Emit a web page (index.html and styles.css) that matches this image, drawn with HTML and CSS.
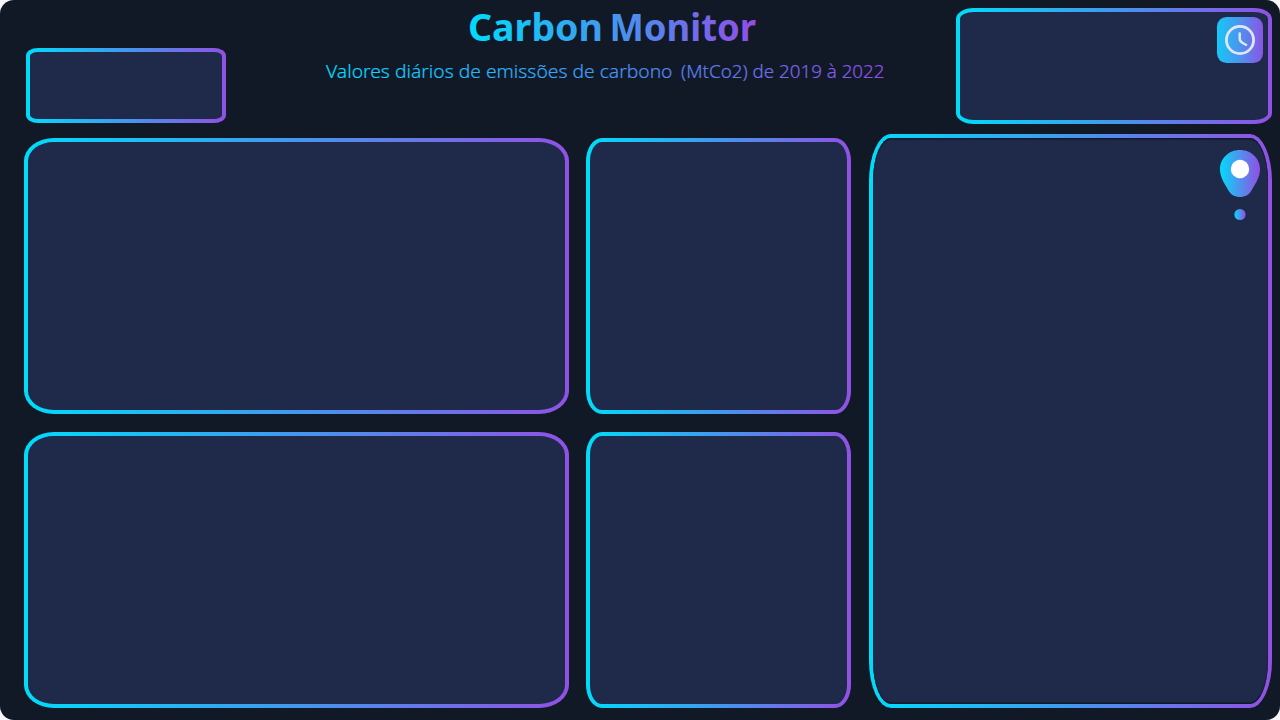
FILE: index.html
```html
<!DOCTYPE html>
<html lang="pt-BR">
<head>
<meta charset="utf-8">
<title>Carbon Monitor</title>
<link rel="stylesheet" href="styles.css">
</head>
<body>
<div class="dashboard">
  <header class="header">
    <div class="panel panel-filter"><div class="panel-body"></div></div>
    <svg class="heading" width="570" height="100" viewBox="0 0 570 100">
      <defs>
        <linearGradient id="title-grad" gradientUnits="userSpaceOnUse" x1="149" y1="0" x2="436" y2="0">
          <stop offset="0" stop-color="#00dcfb"/><stop offset=".5" stop-color="#4397ee"/><stop offset="1" stop-color="#924de6"/>
        </linearGradient>
        <linearGradient id="sub-grad" gradientUnits="userSpaceOnUse" x1="6" y1="0" x2="565" y2="0">
          <stop offset="0" stop-color="#00e1fd"/><stop offset=".5" stop-color="#4397ee"/><stop offset="1" stop-color="#924de6"/>
        </linearGradient>
      </defs>
      <text class="title" y="40.500"><tspan x="148" textLength="135" lengthAdjust="spacingAndGlyphs">Carbon</tspan> <tspan x="289.500" textLength="146.500" lengthAdjust="spacingAndGlyphs">Monitor</tspan></text>
      <text class="subtitle" y="78"><tspan x="6" textLength="346.500" lengthAdjust="spacingAndGlyphs">Valores diários de emissões de carbono</tspan> <tspan x="361" textLength="203.500" lengthAdjust="spacingAndGlyphs">(MtCo2) de 2019 à 2022</tspan></text>
    </svg>
    <div class="panel panel-period">
      <div class="panel-body">
        <svg class="clock" width="46" height="46" viewBox="0 0 46 46">
          <defs>
            <linearGradient id="clock-grad">
              <stop offset="0" stop-color="#16c8f5"/><stop offset=".5" stop-color="#4c93ee"/><stop offset="1" stop-color="#8a55e5"/>
            </linearGradient>
          </defs>
          <rect width="46" height="46" rx="9.5" fill="url(#clock-grad)"/>
          <circle cx="23" cy="23" r="13.6" fill="none" stroke="#dfe5fb" stroke-width="2.8"/>
          <path d="M22.700 16.500v5.300c0 2.800 3.200 4.700 6.400 6" fill="none" stroke="#dfe5fb" stroke-width="2.500" stroke-linecap="round"/>
        </svg>
      </div>
    </div>
  </header>
  <main class="content">
    <section class="charts">
      <div class="panel panel-wide"><div class="panel-body"></div></div>
      <div class="panel panel-narrow"><div class="panel-body"></div></div>
      <div class="panel panel-wide"><div class="panel-body"></div></div>
      <div class="panel panel-narrow"><div class="panel-body"></div></div>
    </section>
    <aside class="panel panel-map">
      <div class="panel-body">
        <svg class="pin" width="40" height="72" viewBox="0 0 40 72">
          <defs>
            <linearGradient id="pin-grad">
              <stop offset="0" stop-color="#00dcfb"/><stop offset=".5" stop-color="#5191ed"/><stop offset="1" stop-color="#924de6"/>
            </linearGradient>
          </defs>
          <path d="M20 0C8.500 0 0 8.500 0 19.500C0 27 4.500 33.500 8.200 40C11 45 15 47 20 47S29 45 31.800 40C35.500 33.500 40 27 40 19.500C40 8.500 31.500 0 20 0Z" fill="url(#pin-grad)"/>
          <circle cx="20" cy="19" r="9.200" fill="#fff"/>
          <circle cx="20" cy="64.500" r="5.600" fill="url(#pin-grad)"/>
        </svg>
      </div>
    </aside>
  </main>
</div>
</body>
</html>
```
FILE: styles.css
```css
* { box-sizing: border-box; }

body {
  margin: 0;
  background: #f7f7f7;
  font-family: "Noto Sans", sans-serif;
}

.dashboard {
  width: 1280px;
  height: 720px;
  border-radius: 14px;
  background: #111826;
  overflow: hidden;
}

.header {
  height: 134px;
  display: flex;
  align-items: flex-start;
  padding: 0 8px 0 26px;
}

.heading {
  display: block;
  flex: none;
  margin-left: 94px;
}

.title {
  font-size: 37.5px;
  font-weight: 700;
  fill: url(#title-grad);
}

.subtitle {
  font-size: 18.5px;
  font-weight: 300;
  fill: url(#sub-grad);
  stroke: url(#sub-grad);
  stroke-width: 0.2px;
}

.panel {
  padding: 4px;
  border-radius: var(--rx) / var(--ry);
  background: linear-gradient(90deg, #00dcfa 0%, #4397ee 50%, #9151e4 100%);
}

.panel-body {
  height: 100%;
  border-radius: calc(var(--rx) - 4px) / calc(var(--ry) - 4px);
  background: #1f294a;
}

.panel-filter {
  --rx: 12px;
  --ry: 8px;
  width: 200px;
  height: 75px;
  margin-top: 48px;
}

.panel-period {
  --rx: 18px;
  --ry: 11px;
  width: 316px;
  height: 116px;
  margin: 8px 0 0 auto;
}

.panel-period .panel-body,
.panel-map .panel-body {
  display: flex;
  align-items: flex-start;
  justify-content: flex-end;
}

.panel-period .panel-body { padding: 5px; }

.content {
  display: flex;
  justify-content: space-between;
  padding: 0 8px 0 24px;
}

.charts {
  display: grid;
  grid-template-columns: 545px 265px;
  grid-template-rows: 276px 276px;
  gap: 18px 17px;
  padding-top: 4px;
}

.panel-wide { --rx: 30px; --ry: 23px; }

.panel-narrow { --rx: 16px; --ry: 23px; }

.panel-map {
  --rx: 22px;
  --ry: 47px;
  width: 403px;
  height: 574px;
}

.panel-map .panel-body {
  padding: 12px 8px;
  box-shadow: inset 0 1.5px 1px #111826, inset 0 -1.5px 1px #111826;
}
```
